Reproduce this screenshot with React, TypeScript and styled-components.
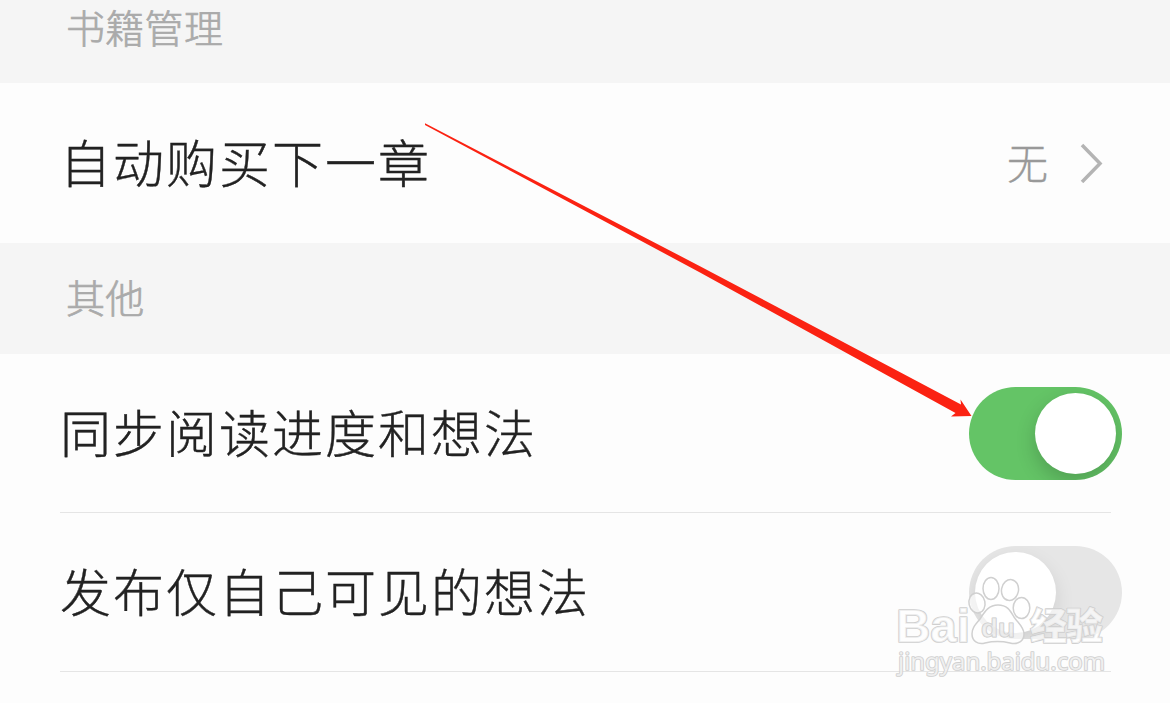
import React from "react";
import styled, { createGlobalStyle } from "styled-components";

const GlobalStyle = createGlobalStyle`
  body {
    margin: 0;
    background: #fdfdfd;
    overflow: hidden;
    font-family: "Noto Sans CJK SC", "Noto Sans", sans-serif;
  }
  * { box-sizing: border-box; }
`;

const Page = styled.main`
  position: relative;
  width: 1170px;
  height: 703px;
  overflow: hidden;
  background: #fdfdfd;
`;

const SectionHeader = styled.h2<{ $height: number; $padBottom: number }>`
  display: flex;
  align-items: flex-end;
  height: ${(p) => p.$height}px;
  margin: 0;
  padding: 0 66px ${(p) => p.$padBottom}px;
  background: #f5f5f5;
  color: #aaaaaa;
  font-size: 39px;
  font-weight: 300;
  -webkit-text-stroke: 0.7px #aaaaaa;
  letter-spacing: 0.3px;
  line-height: 46px;
`;

const Row = styled.div<{ $height: number; $divider?: boolean }>`
  display: flex;
  align-items: center;
  justify-content: space-between;
  height: ${(p) => p.$height}px;
  margin: 0 59px 0 60px;
  border-bottom: ${(p) => (p.$divider ? "1px solid #e5e5e5" : "none")};
`;

const Label = styled.span`
  padding-bottom: 4px;
  color: #222222;
  font-size: 51px;
  font-weight: 300;
  -webkit-text-stroke: 0.4px #222222;
  letter-spacing: 2px;
  line-height: 70px;
  white-space: nowrap;
`;

const Value = styled.span`
  display: flex;
  align-items: center;
  gap: 32px;
  margin-right: 7px;
  color: #999999;
  font-size: 41px;
  font-weight: 300;
  -webkit-text-stroke: 0.4px #999999;
  line-height: 56px;
`;

const ValueText = styled.span`
  padding-bottom: 5px;
`;

const Switch = styled.button<{ $on: boolean }>`
  display: flex;
  flex: none;
  justify-content: ${(p) => (p.$on ? "flex-end" : "flex-start")};
  align-items: center;
  width: 153px;
  height: 93px;
  margin-right: -11px;
  padding: 0 6px;
  border: 0;
  border-radius: 47px;
  overflow: hidden;
  background: ${(p) => (p.$on ? "#64c466" : "#e6e6e6")};
`;

const Knob = styled.span<{ $on: boolean }>`
  width: 81px;
  height: 81px;
  border-radius: 50%;
  background: #ffffff;
  box-shadow: 0 8px 20px rgba(0, 0, 0, ${(p) => (p.$on ? 0.19 : 0.1)});
`;

const Overlay = styled.svg`
  position: absolute;
  inset: 0;
  pointer-events: none;
`;

const Mark = styled.g`
  fill: #ffffff;
  fill-opacity: 0.65;
  stroke: #cfcfcf;
  stroke-width: 1.7;
  stroke-linejoin: round;
  paint-order: stroke;
`;

const Paw = styled.g`
  stroke: #d0d0d0;
  stroke-width: 1.5;
  paint-order: normal;
`;

const PawText = styled.text`
  fill: #e8e8e8;
  stroke: #c8c8c8;
  stroke-width: 1;
`;

function Watermark() {
  return (
    <Overlay width="1170" height="703" viewBox="0 0 1170 703">
      <Mark>
        <text x="896" y="642" fontFamily="Liberation Sans, sans-serif" fontWeight="700" fontSize="46" textLength="74" lengthAdjust="spacingAndGlyphs">Bai</text>
        <Paw>
          <ellipse cx="977" cy="603" rx="8" ry="10" transform="rotate(-12 977 603)" />
          <ellipse cx="991" cy="588.5" rx="8" ry="11" />
          <ellipse cx="1010" cy="590" rx="8.5" ry="10.5" transform="rotate(10 1010 590)" />
          <ellipse cx="1021.5" cy="608" rx="8.3" ry="10.5" />
          <path d="M998 605C988 605 984 613 980 619C975 625 972 628 972 634C972 641 978 645 985 643C994 641 1001 641 1010 643C1018 645 1024 641 1024 634C1024 627 1018 623 1014 617C1010 610 1007 605 998 605Z" />
        </Paw>
        <PawText x="981" y="637" fontFamily="Liberation Sans, sans-serif" fontWeight="700" fontSize="26" textLength="34" lengthAdjust="spacingAndGlyphs">du</PawText>
        <text x="1030" y="640" fontFamily="Noto Sans CJK SC, sans-serif" fontWeight="900" fontSize="37" textLength="73">经验</text>
        <text x="898" y="670" fontFamily="Noto Sans, sans-serif" fontSize="24" textLength="207" lengthAdjust="spacingAndGlyphs">jingyan.baidu.com</text>
      </Mark>
    </Overlay>
  );
}

export default function App() {
  return (
    <>
      <GlobalStyle />
      <Page>
        <SectionHeader $height={83} $padBottom={34}>书籍管理</SectionHeader>
        <Row $height={160}>
          <Label>自动购买下一章</Label>
          <Value>
            <ValueText>无</ValueText>
            <svg width="24" height="40" viewBox="0 0 24 40" fill="none" stroke="#b4b4b4" strokeWidth="3.5">
              <path d="M2 2L20 20.5L2 39" />
            </svg>
          </Value>
        </Row>
        <SectionHeader $height={111} $padBottom={35}>其他</SectionHeader>
        <Row $height={159} $divider>
          <Label>同步阅读进度和想法</Label>
          <Switch $on role="switch" aria-checked="true"><Knob $on /></Switch>
        </Row>
        <Row $height={159} $divider>
          <Label>发布仅自己可见的想法</Label>
          <Switch $on={false} role="switch" aria-checked="false"><Knob $on={false} /></Switch>
        </Row>
        <Overlay width="1170" height="703" viewBox="0 0 1170 703">
          <path fill="#fb2212" d="M425 123.3L700 266.2L961 404.5L960.5 399.5L971.5 416L951 416.5L955.5 413L700 272.5L425 125Z" />
        </Overlay>
        <Watermark />
      </Page>
    </>
  );
}
